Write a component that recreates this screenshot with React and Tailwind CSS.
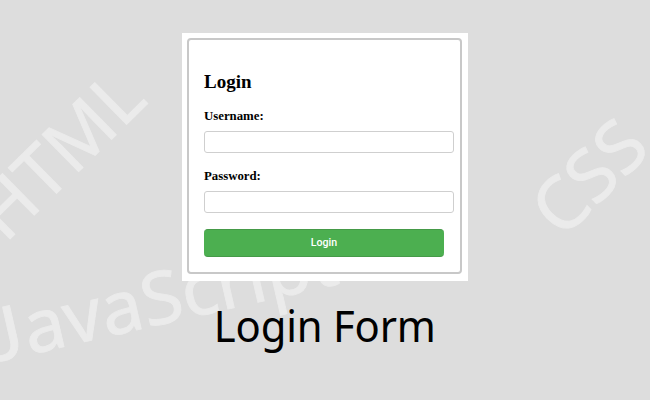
import React, { useState } from 'react';

function Watermark() {
    return (
        <svg
            className="absolute inset-0 w-[650px] h-[400px] pointer-events-none select-none"
            viewBox="0 0 650 400"
            fill="#ebebeb"
            stroke="#ebebeb"
            strokeWidth="0.8"
            fontFamily="'Noto Sans', sans-serif"
            fontSize="73"
            aria-hidden="true"
        >
            <text transform="translate(5 244) rotate(-44.5)" textLength="202" lengthAdjust="spacingAndGlyphs">HTML</text>
            <text transform="translate(562 240) rotate(-44.5)" textLength="127" lengthAdjust="spacingAndGlyphs">CSS</text>
            <g transform="translate(-3 362) rotate(-12.9)">
                <text fontFamily="Lato, sans-serif" textLength="31" lengthAdjust="spacingAndGlyphs">J</text>
                <text x="33" textLength="320" lengthAdjust="spacingAndGlyphs">avaScript</text>
            </g>
        </svg>
    );
}

function Field({ label, type, value, onChange }) {
    return (
        <label className="block h-[60px] font-bold text-[12.8px] leading-[14px] text-black">
            {label}
            <input
                type={type}
                value={value}
                onChange={(e) => onChange(e.target.value)}
                className="block w-[250px] h-[22px] mt-2 px-2 bg-white border border-[#cfcfcf] rounded-[3px] font-normal outline-none"
            />
        </label>
    );
}

export default function App() {
    const [username, setUsername] = useState('');
    const [password, setPassword] = useState('');

    const handleSubmit = (e) => {
        e.preventDefault();
    };

    return (
        <div className="relative w-[650px] h-[400px] overflow-hidden bg-[#dddddd]">
            <Watermark />
            <div className="relative flex flex-col items-center pt-[33px]">
                <div className="w-[286px] h-[248px] bg-white pt-[5px] pl-[5px]">
                    <form
                        onSubmit={handleSubmit}
                        className="w-[275px] h-[236px] border-2 border-[#c8c8c8] rounded-[4px] pl-[15px] pt-[30px] font-['Liberation_Serif',serif]"
                    >
                        <h2 className="h-[39px] text-[19px] leading-6 font-bold text-black">Login</h2>
                        <Field label="Username:" type="text" value={username} onChange={setUsername} />
                        <Field label="Password:" type="password" value={password} onChange={setPassword} />
                        <button
                            type="submit"
                            className="flex items-center justify-center w-[240px] h-[28px] rounded-[4px] bg-[#4caf50] border-y border-[#459a48] font-[Roboto,sans-serif] font-medium text-[10.6px] text-white"
                        >
                            Login
                        </button>
                    </form>
                </div>
                <h1 className="mt-[14px] text-[44px] leading-[60px] tracking-[-0.2px] whitespace-nowrap text-black font-['Noto_Sans',sans-serif] origin-center scale-x-[0.95]">
                    Login Form
                </h1>
            </div>
        </div>
    );
}
